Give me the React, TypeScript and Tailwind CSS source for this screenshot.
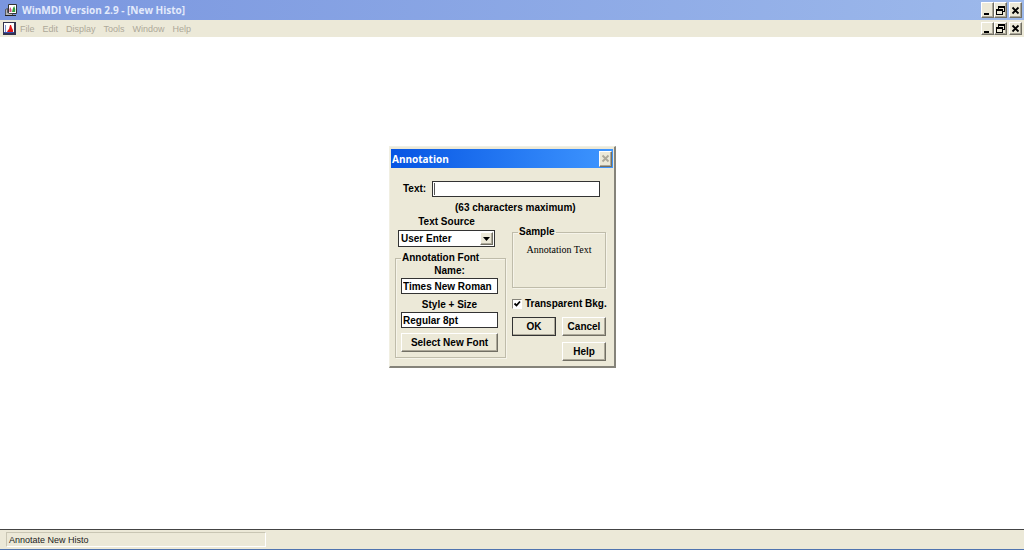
import React, { useState } from 'react';
import clsx from 'clsx';

const menuItems = ['File', 'Edit', 'Display', 'Tools', 'Window', 'Help'];

const raised =
  'bg-[#ece9d8] border border-t-white border-l-white border-r-[#716f64] border-b-[#716f64] shadow-[inset_-1px_-1px_0_#aca899]';

type Glyph = 'minimize' | 'restore' | 'close';

const ControlGlyph: React.FC<{ kind: Glyph }> = ({ kind }) => (
  <svg viewBox="0 0 9 9" className="w-[9px] h-[9px]" fill="none" stroke="currentColor">
    {kind === 'minimize' && <path d="M1 8h5" strokeWidth="2" />}
    {kind === 'restore' && (
      <>
        <path d="M2 1h7" strokeWidth="2" />
        <path d="M2.5 1v2M8.5 1v5M7 5.5h2" />
        <path d="M0 4h7" strokeWidth="2" />
        <path d="M.5 4v5M6.5 4v5M0 8.5h7" />
      </>
    )}
    {kind === 'close' && <path d="M1.5 1.5l6 6M7.5 1.5l-6 6" strokeWidth="1.8" />}
  </svg>
);

const WindowControls: React.FC<{ small?: boolean }> = ({ small }) => (
  <div className="flex">
    {(['minimize', 'restore', 'close'] as Glyph[]).map((kind) => (
      <button
        key={kind}
        type="button"
        aria-label={kind}
        className={clsx(
          raised,
          'flex items-center justify-center text-black',
          small ? 'w-[13px] h-[13px]' : 'w-[13px] h-4',
          kind === 'close' && 'ml-[2px]'
        )}
      >
        <ControlGlyph kind={kind} />
      </button>
    ))}
  </div>
);

const AppIcon = () => (
  <svg viewBox="0 0 14 14" className="w-[14px] h-[14px]">
    <path d="M4.5 1.5h8v9h-8z" fill="#fff" stroke="#333" />
    <path d="M5.5 9V6l1-2 1 3v2z" fill="#d04a80" />
    <path d="M8 9l1-4 1.2-2 1 3v3z" fill="#2f9e3c" />
    <path d="M1.5 6.5l2-1v4l2 1h3v2h-7z" fill="#b5b5b5" stroke="#444" strokeWidth=".8" />
    <path d="M1 12.5h11" stroke="#222" fill="none" />
  </svg>
);

const HistoIcon = () => (
  <svg viewBox="0 0 13 13" className="w-[13px] h-[13px]">
    <path d="M0 0h13v13H0z" fill="#33334d" />
    <path d="M1 1h10v10H1z" fill="#fff" />
    <path d="M2.5 3v7" stroke="#7d8fd0" fill="none" />
    <path d="M1 10.5h10" stroke="#3a4fb0" fill="none" />
    <path d="M4 10l1-2 1-1 1-4h1l1 3 1 2v2z" fill="#e01818" />
  </svg>
);

const groupBox = 'min-w-0 border border-[#bfbcaa] shadow-[inset_1px_1px_0_#f6f4ea,1px_1px_0_#f6f4ea]';
const textBox = 'block w-full h-4 px-px bg-white border border-[#333] outline-none';

const AnnotationDialog: React.FC = () => {
  const [text, setText] = useState('');
  const [transparent, setTransparent] = useState(true);

  return (
    <form
      role="dialog"
      aria-label="Annotation"
      onSubmit={(e) => e.preventDefault()}
      className="w-[227px] px-px pt-[2px] bg-[#ece9d8] border-t border-l border-t-[#f1efe2] border-l-[#f1efe2] border-r-2 border-b-2 border-r-[#85837a] border-b-[#85837a] font-['Liberation_Sans',sans-serif] text-[10px] leading-3 font-bold text-black"
    >
      {/* Title bar */}
      <div className="flex items-center justify-between h-[19px] pl-px pr-px bg-gradient-to-r from-[#0654e3] to-[#3f96ff]">
        <h2 className="font-['Open_Sans',sans-serif] text-[10px] text-white">Annotation</h2>
        <button
          type="button"
          aria-label="close"
          className={clsx(raised, 'w-[13px] h-4 flex items-center justify-center text-[#aca899]')}
        >
          <ControlGlyph kind="close" />
        </button>
      </div>

      <div className="pt-[13px] pl-1 pr-[7px] pb-[5px]">
        <div className="flex items-center gap-[6px] pl-2 pr-[6px]">
          <label htmlFor="annotation-text">Text:</label>
          <span className="relative flex-1">
            <input
              id="annotation-text"
              maxLength={63}
              value={text}
              onChange={(e) => setText(e.target.value)}
              className={textBox}
            />
            {/* Caret */}
            <span className="absolute left-[2px] top-[2px] w-px h-3 bg-[#555]" />
          </span>
        </div>
        <p className="mt-[5px] pl-[60px] whitespace-nowrap">(63 characters maximum)</p>

        <div className="flex justify-between mt-[2px]">
          {/* Font column */}
          <div className="w-[111px]">
            <div className="w-[97px] ml-[3px] text-center">
              <label htmlFor="text-source" className="block">Text Source</label>
              <div className="relative mt-[2px]">
                <select
                  id="text-source"
                  className="appearance-none block w-full h-[17px] pl-[2px] bg-white border border-[#333] outline-none"
                >
                  <option>User Enter</option>
                </select>
                <span
                  className={clsx(
                    raised,
                    'absolute right-[2px] top-[2px] w-[13px] h-[13px] flex items-center justify-center pointer-events-none'
                  )}
                >
                  <svg viewBox="0 0 7 4" className="w-[7px] h-[4px]">
                    <path d="M0 0h7L3.5 4z" fill="#000" />
                  </svg>
                </span>
              </div>
            </div>

            <fieldset className={clsx(groupBox, 'mt-[5px] px-[5px] pb-[5px]')}>
              <legend className="px-px">Annotation Font</legend>
              <div className="w-[97px] pt-px text-center">
                <label htmlFor="font-name" className="block">Name:</label>
                <input id="font-name" readOnly value="Times New Roman" className={clsx(textBox, 'mt-px')} />
                <label htmlFor="font-style" className="block mt-[5px]">Style + Size</label>
                <input id="font-style" readOnly value="Regular 8pt" className={clsx(textBox, 'mt-px')} />
                <button type="button" className={clsx(raised, 'block w-full h-[19px] mt-[5px]')}>
                  Select New Font
                </button>
              </div>
            </fieldset>
          </div>

          {/* Sample column */}
          <div className="w-[94px] mt-[10px]">
            <fieldset className={clsx(groupBox, 'h-[62px] px-[5px]')}>
              <legend className="px-px">Sample</legend>
              <p className="mt-[6px] text-center font-['Liberation_Serif',serif] font-normal whitespace-nowrap">
                Annotation Text
              </p>
            </fieldset>
            <label className="flex items-center gap-[3px] mt-[10px] whitespace-nowrap">
              <span className="relative w-[10px] h-[10px]">
                <input
                  type="checkbox"
                  checked={transparent}
                  onChange={(e) => setTransparent(e.target.checked)}
                  className="appearance-none block w-[10px] h-[10px] bg-white border border-t-[#85837a] border-l-[#85837a] border-r-white border-b-white"
                />
                {transparent && (
                  <svg viewBox="0 0 10 10" className="absolute left-0 top-0 w-[10px] h-[10px] pointer-events-none">
                    <path d="M2.5 4.5l2 2 3.5-4" stroke="#000" strokeWidth="1.8" fill="none" />
                  </svg>
                )}
              </span>
              Transparent Bkg.
            </label>
            <div className="grid grid-cols-2 gap-[6px] mt-[7px]">
              <button type="submit" className={clsx(raised, 'h-[19px] outline outline-1 -outline-offset-1 outline-[#333]')}>
                OK
              </button>
              <button type="button" className={clsx(raised, 'h-[19px]')}>Cancel</button>
              <button type="button" className={clsx(raised, 'h-[19px] col-start-2')}>Help</button>
            </div>
          </div>
        </div>
      </div>
    </form>
  );
};

const App: React.FC = () => {
  return (
    <div className="min-h-screen flex flex-col bg-white font-['Liberation_Sans',sans-serif] text-[9px] leading-3">
      {/* Title bar */}
      <header className="flex items-center justify-between h-5 pl-1 pr-[2px] bg-gradient-to-r from-[#7a96df] to-[#9db9eb]">
        <div className="flex items-center gap-1">
          <AppIcon />
          <h1 className="font-['Open_Sans',sans-serif] text-[10px] font-bold text-[#e3eafb]">
            WinMDI Version 2.9 - [New Histo]
          </h1>
        </div>
        <WindowControls />
      </header>

      {/* Menu bar */}
      <nav className="flex items-center justify-between h-[17px] pl-[3px] pr-[2px] bg-[#ece9d8]">
        <div className="flex items-center gap-1">
          <HistoIcon />
          <div className="flex gap-2">
            {menuItems.map((item) => (
              <button key={item} type="button" className="text-[#aca899]">
                {item}
              </button>
            ))}
          </div>
        </div>
        <WindowControls small />
      </nav>

      <main className="flex-1 flex items-start justify-center pt-[109px] pr-[19px]">
        <AnnotationDialog />
      </main>

      {/* Status bar */}
      <footer className="h-[21px] px-[6px] pt-[2px] bg-[#ece9d8] border-t border-t-[#444] border-b border-b-[#4f74b0]">
        <p className="w-[260px] h-[15px] px-[2px] leading-[14px] border border-t-[#c9c6b4] border-l-[#c9c6b4] border-r-white border-b-white text-[#222]">
          Annotate New Histo
        </p>
      </footer>
    </div>
  );
};

export default App;
